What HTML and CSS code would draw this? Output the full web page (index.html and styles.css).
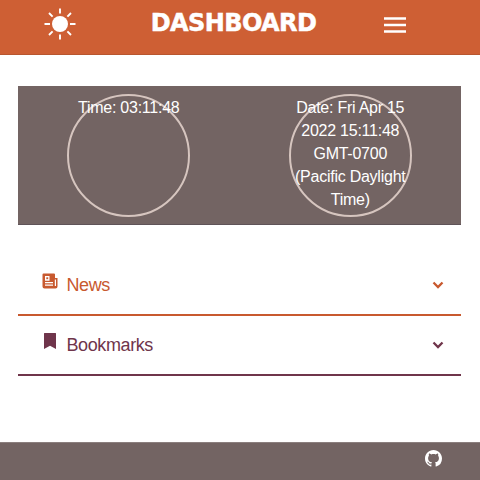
FILE: index.html
```html
<!DOCTYPE html>
<html lang="en">
<head>
<meta charset="utf-8">
<title>Dashboard</title>
<link rel="stylesheet" href="styles.css">
</head>
<body>
<header class="topbar">
  <svg class="sun" viewBox="0 0 32 32"><circle cx="16" cy="16" r="8" fill="#fff"/><path d="M16 .5v5M16 26.500v5M.5 16h5.500M26 16h5.500M5 5l3.600 3.600M23.400 23.400L27 27M27 5l-3.600 3.600M8.600 23.400L5 27" stroke="#fff" stroke-width="1.900"/></svg>
  <h1 class="title">DASHBOARD</h1>
  <svg class="menu" viewBox="0 0 22 16"><path d="M0 1.500h22M0 8h22M0 14.500h22" stroke="#fff" stroke-width="2.600"/></svg>
</header>
<main>
  <section class="clock">
    <div class="cell"><div class="dial">Time: 03:11:48</div></div>
    <div class="cell"><div class="dial">Date: Fri Apr 15 2022 15:11:48 GMT-0700 (Pacific Daylight Time)</div></div>
  </section>
  <section class="panels">
    <div class="row news">
      <svg class="icon" viewBox="0 0 16 16"><path fill="currentColor" fill-rule="evenodd" d="M1.500.5h10.500a1 1 0 0 1 1 1V5h2.500v8.500a2 2 0 0 1-2 2h-11a2 2 0 0 1-2-2v-12a1 1 0 0 1 1-1zM3 3v4.800h4.500V3zM3 9v1.200h8V9zM3 11.500v1.200h8v-1.200zM12.800 6.500v6.500h1.200v-6.500z"/><path fill="currentColor" d="M4.300 4.300h1.900v1.900H4.300z"/></svg>
      <span class="label">News</span>
      <svg class="chevron" viewBox="0 0 12 8"><path d="M1.500 1.500L6 6l4.500-4.500" fill="none" stroke="currentColor" stroke-width="2.300"/></svg>
    </div>
    <div class="row marks">
      <svg class="icon" viewBox="0 0 16 16"><path fill="currentColor" d="M2.500 0h11a.5.5 0 0 1 .5.500v15.500l-6-3.200L2 16V.5a.5.5 0 0 1 .5-.5z"/></svg>
      <span class="label">Bookmarks</span>
      <svg class="chevron" viewBox="0 0 12 8"><path d="M1.500 1.500L6 6l4.500-4.500" fill="none" stroke="currentColor" stroke-width="2.300"/></svg>
    </div>
  </section>
</main>
<footer class="footer">
  <svg class="github" viewBox="0 0 16 16"><path fill="#fff" d="M8 0C3.580 0 0 3.580 0 8c0 3.540 2.290 6.530 5.470 7.590.4.070.55-.17.55-.38 0-.19-.01-.82-.01-1.490-2.010.37-2.530-.49-2.690-.94-.09-.23-.48-.94-.82-1.130-.28-.15-.68-.52-.01-.53.63-.01 1.080.58 1.230.82.72 1.210 1.870.87 2.330.66.07-.52.28-.87.51-1.070-1.780-.2-3.640-.89-3.640-3.950 0-.87.31-1.590.82-2.150-.08-.2-.36-1.020.08-2.120 0 0 .67-.21 2.200.82.64-.18 1.320-.27 2-.27s1.360.09 2 .27c1.530-1.040 2.200-.82 2.200-.82.44 1.100.16 1.920.08 2.120.51.56.82 1.270.82 2.150 0 3.070-1.870 3.750-3.650 3.950.29.25.54.73.54 1.480 0 1.070-.01 1.930-.01 2.200 0 .21.15.46.55.38A8 8 0 0 0 16 8c0-4.420-3.580-8-8-8z"/></svg>
</footer>
</body>
</html>
```
FILE: styles.css
```css
* { box-sizing: border-box; }
body {
  margin: 0;
  height: 480px;
  display: flex;
  flex-direction: column;
  overflow: hidden;
  background: #fff;
  font-family: "Liberation Sans", Arial, sans-serif;
}
svg { display: block; flex: none; }
.topbar {
  height: 55px;
  display: flex;
  align-items: flex-start;
  justify-content: space-between;
  padding: 8px 74px 0 44px;
  background: #ce5f34;
  border-bottom: 1px solid #b8562f;
}
.sun { width: 32px; height: 32px; }
.title {
  margin: 1px 0 0 7px;
  color: #fff;
  font: bold 24px/28px "DejaVu Sans", sans-serif;
  letter-spacing: -0.600px;
  -webkit-text-stroke: 0.5px #fff;
}
.menu { width: 22px; height: 16px; margin-top: 9px; }
main { flex: 1; padding: 31px 19px 0 18px; }
.clock {
  height: 139px;
  display: flex;
  padding-top: 8px;
  background: #736463;
  border-bottom: 1px solid #5f5358;
}
.cell { flex: 1; display: flex; justify-content: center; }
.dial {
  width: 123px;
  height: 123px;
  border: 2px solid #d6c5bf;
  border-radius: 50%;
  color: #fff;
  font-size: 16px;
  letter-spacing: -0.25px;
  line-height: 23px;
  text-align: center;
}
.panels { padding-top: 31px; }
.row {
  height: 60px;
  display: flex;
  align-items: center;
  padding: 0 17.500px 0 24px;
  border-bottom: 2px solid;
}
.news { color: #c8592f; }
.marks { color: #6f354b; }
.icon { width: 16px; height: 16px; margin-top: -9px; }
.label { flex: 1; margin-left: 8.500px; font-size: 18px; letter-spacing: -0.4px; line-height: 24px; }
.chevron { width: 12px; height: 8px; }
.footer {
  height: 38px;
  display: flex;
  justify-content: flex-end;
  padding: 7px 38px 0 0;
  background: #736463;
  border-top: 1px solid #8b7f7e;
}
.github { width: 17px; height: 17px; }
```
